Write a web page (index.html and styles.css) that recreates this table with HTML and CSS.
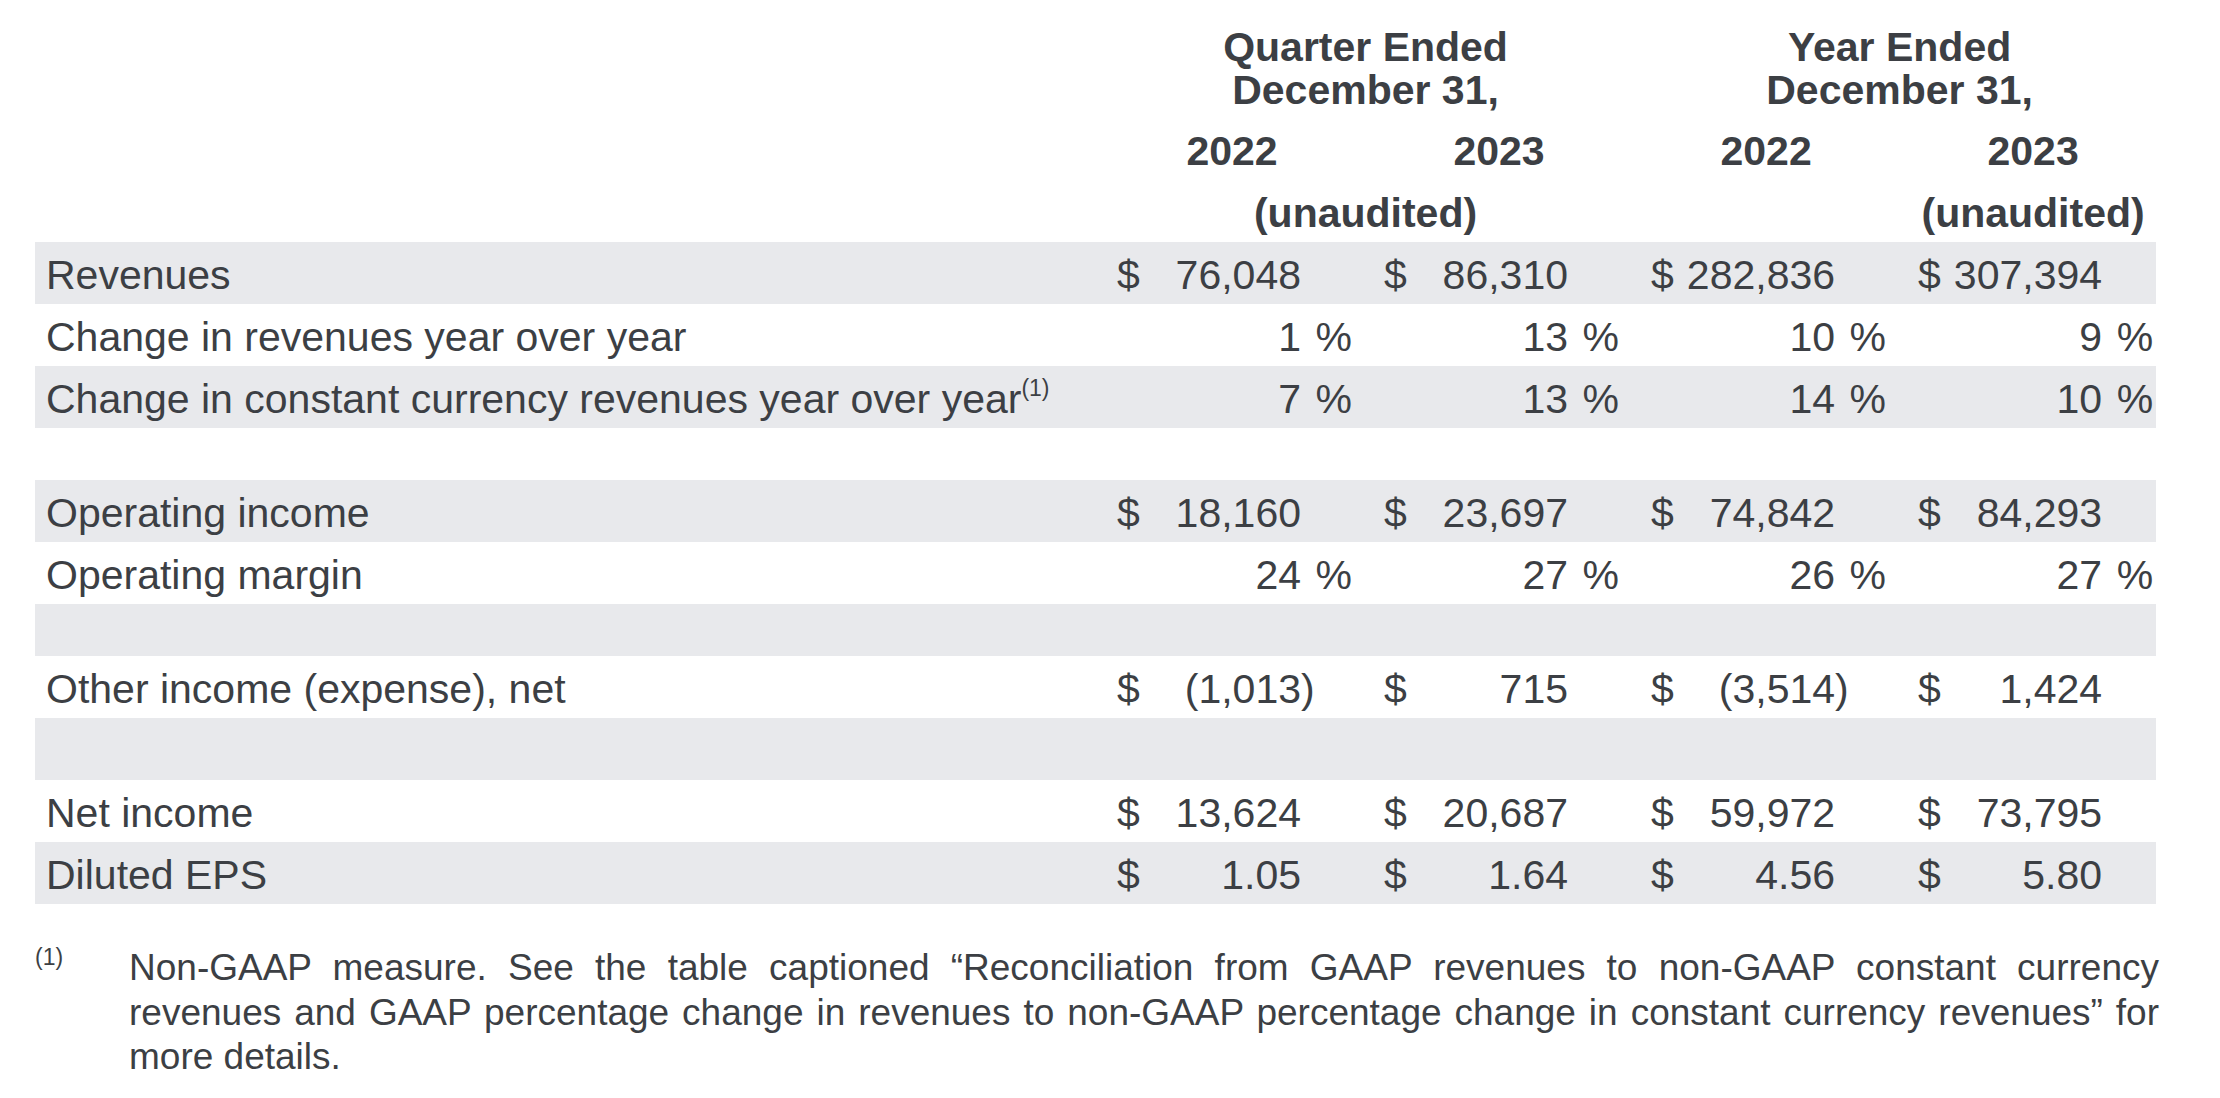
FILE: index.html
```html
<!DOCTYPE html>
<html lang="en">
<head>
<meta charset="utf-8">
<title>Financial Summary</title>
<link rel="stylesheet" href="styles.css">
</head>
<body>
<div class="page">
<table class="fin">
  <colgroup>
    <col class="c-label">
    <col class="c-dol"><col class="c-val"><col class="c-pct"><col class="c-gap">
    <col class="c-dol"><col class="c-val"><col class="c-pct"><col class="c-gap">
    <col class="c-dol"><col class="c-val"><col class="c-pct"><col class="c-gap">
    <col class="c-dol"><col class="c-val"><col class="c-pct"><col class="c-end">
  </colgroup>
  <thead>
    <tr class="h1">
      <th></th>
      <th colspan="7">Quarter Ended<br>December 31,</th>
      <th></th>
      <th colspan="7">Year Ended<br>December 31,</th>
      <th></th>
    </tr>
    <tr class="h2">
      <th></th>
      <th colspan="3">2022</th><th></th>
      <th colspan="3">2023</th><th></th>
      <th colspan="3">2022</th><th></th>
      <th colspan="3">2023</th><th></th>
    </tr>
    <tr class="h3">
      <th></th>
      <th colspan="7">(unaudited)</th>
      <th></th>
      <th colspan="3"></th><th></th>
      <th colspan="3">(unaudited)</th><th></th>
    </tr>
  </thead>
  <tbody>
    <tr class="row gray">
      <td class="lbl">Revenues</td>
      <td class="dol">$</td><td class="val">76,048</td><td class="pct"></td><td></td>
      <td class="dol">$</td><td class="val">86,310</td><td class="pct"></td><td></td>
      <td class="dol">$</td><td class="val">282,836</td><td class="pct"></td><td></td>
      <td class="dol">$</td><td class="val">307,394</td><td class="pct"></td><td></td>
    </tr>
    <tr class="row">
      <td class="lbl">Change in revenues year over year</td>
      <td class="dol"></td><td class="val">1</td><td class="pct">%</td><td></td>
      <td class="dol"></td><td class="val">13</td><td class="pct">%</td><td></td>
      <td class="dol"></td><td class="val">10</td><td class="pct">%</td><td></td>
      <td class="dol"></td><td class="val">9</td><td class="pct">%</td><td></td>
    </tr>
    <tr class="row gray">
      <td class="lbl">Change in constant currency revenues year over year<sup class="ref">(1)</sup></td>
      <td class="dol"></td><td class="val">7</td><td class="pct">%</td><td></td>
      <td class="dol"></td><td class="val">13</td><td class="pct">%</td><td></td>
      <td class="dol"></td><td class="val">14</td><td class="pct">%</td><td></td>
      <td class="dol"></td><td class="val">10</td><td class="pct">%</td><td></td>
    </tr>
    <tr class="blank short">
      <td></td><td></td><td></td><td></td><td></td><td></td><td></td><td></td><td></td><td></td><td></td><td></td><td></td><td></td><td></td><td></td><td></td>
    </tr>
    <tr class="row gray">
      <td class="lbl">Operating income</td>
      <td class="dol">$</td><td class="val">18,160</td><td class="pct"></td><td></td>
      <td class="dol">$</td><td class="val">23,697</td><td class="pct"></td><td></td>
      <td class="dol">$</td><td class="val">74,842</td><td class="pct"></td><td></td>
      <td class="dol">$</td><td class="val">84,293</td><td class="pct"></td><td></td>
    </tr>
    <tr class="row">
      <td class="lbl">Operating margin</td>
      <td class="dol"></td><td class="val">24</td><td class="pct">%</td><td></td>
      <td class="dol"></td><td class="val">27</td><td class="pct">%</td><td></td>
      <td class="dol"></td><td class="val">26</td><td class="pct">%</td><td></td>
      <td class="dol"></td><td class="val">27</td><td class="pct">%</td><td></td>
    </tr>
    <tr class="blank short gray">
      <td></td><td></td><td></td><td></td><td></td><td></td><td></td><td></td><td></td><td></td><td></td><td></td><td></td><td></td><td></td><td></td><td></td>
    </tr>
    <tr class="row">
      <td class="lbl">Other income (expense), net</td>
      <td class="dol">$</td><td class="val">(1,013</td><td class="pct paren">)</td><td></td>
      <td class="dol">$</td><td class="val">715</td><td class="pct"></td><td></td>
      <td class="dol">$</td><td class="val">(3,514</td><td class="pct paren">)</td><td></td>
      <td class="dol">$</td><td class="val">1,424</td><td class="pct"></td><td></td>
    </tr>
    <tr class="blank gray">
      <td></td><td></td><td></td><td></td><td></td><td></td><td></td><td></td><td></td><td></td><td></td><td></td><td></td><td></td><td></td><td></td><td></td>
    </tr>
    <tr class="row">
      <td class="lbl">Net income</td>
      <td class="dol">$</td><td class="val">13,624</td><td class="pct"></td><td></td>
      <td class="dol">$</td><td class="val">20,687</td><td class="pct"></td><td></td>
      <td class="dol">$</td><td class="val">59,972</td><td class="pct"></td><td></td>
      <td class="dol">$</td><td class="val">73,795</td><td class="pct"></td><td></td>
    </tr>
    <tr class="row gray">
      <td class="lbl">Diluted EPS</td>
      <td class="dol">$</td><td class="val">1.05</td><td class="pct"></td><td></td>
      <td class="dol">$</td><td class="val">1.64</td><td class="pct"></td><td></td>
      <td class="dol">$</td><td class="val">4.56</td><td class="pct"></td><td></td>
      <td class="dol">$</td><td class="val">5.80</td><td class="pct"></td><td></td>
    </tr>
  </tbody>
</table>

<div class="note">
  <div class="note-mark">(1)</div>
  <p class="note-text">Non-GAAP measure. See the table captioned “Reconciliation from GAAP revenues to non-GAAP constant currency revenues and GAAP percentage change in revenues to non-GAAP percentage change in constant currency revenues” for more details.</p>
</div>
</div>
</body>
</html>
```

FILE: styles.css
```css
html, body {
  margin: 0;
  padding: 0;
  background: #ffffff;
}

body {
  font-family: "Liberation Sans", Arial, sans-serif;
  color: #3c3f44;
}

.page {
  padding: 0 0 0 35px;
}

.fin {
  table-layout: fixed;
  width: 2121px;
  border-collapse: collapse;
  border-spacing: 0;
  font-size: 41px;
}

.c-label { width: 1077px; }
.c-dol { width: 40px; }
.c-val { width: 149px; }
.c-pct { width: 51px; }
.c-gap { width: 27px; }
.c-end { width: 3px; }

.fin th {
  font-weight: bold;
  text-align: center;
  vertical-align: top;
  line-height: 43px;
  padding: 0;
  white-space: nowrap;
}

.h1 th { padding-top: 26px; }
.h2 th { padding-top: 18px; }
.h3 th { padding-top: 19px; padding-bottom: 7px; }

.fin td {
  padding: 4px 0 0;
  line-height: 58px;
  vertical-align: top;
  white-space: nowrap;
}

.row { height: 62px; }
.blank { height: 62px; }
.blank.short { height: 52px; }
.blank td { padding: 0; line-height: 0; }

.gray { background: #e8e9ec; }

.lbl {
  padding-left: 11px !important;
  text-align: left;
}

.dol {
  text-align: left;
  padding-left: 5px !important;
}

.val { text-align: right; }

.pct { text-align: right; }
.pct.paren { text-align: left; }

.ref {
  font-size: 23px;
  line-height: 0;
  vertical-align: 17px;
}

.note {
  display: flex;
  align-items: flex-start;
  width: 2124px;
  margin-top: 42px;
}

.note-mark {
  width: 94px;
  flex: 0 0 94px;
  font-size: 23px;
  line-height: 23px;
  margin-top: 0;
}

.note-text {
  flex: 1 1 auto;
  margin: 0;
  font-size: 37px;
  line-height: 44.5px;
  text-align: justify;
}
```
